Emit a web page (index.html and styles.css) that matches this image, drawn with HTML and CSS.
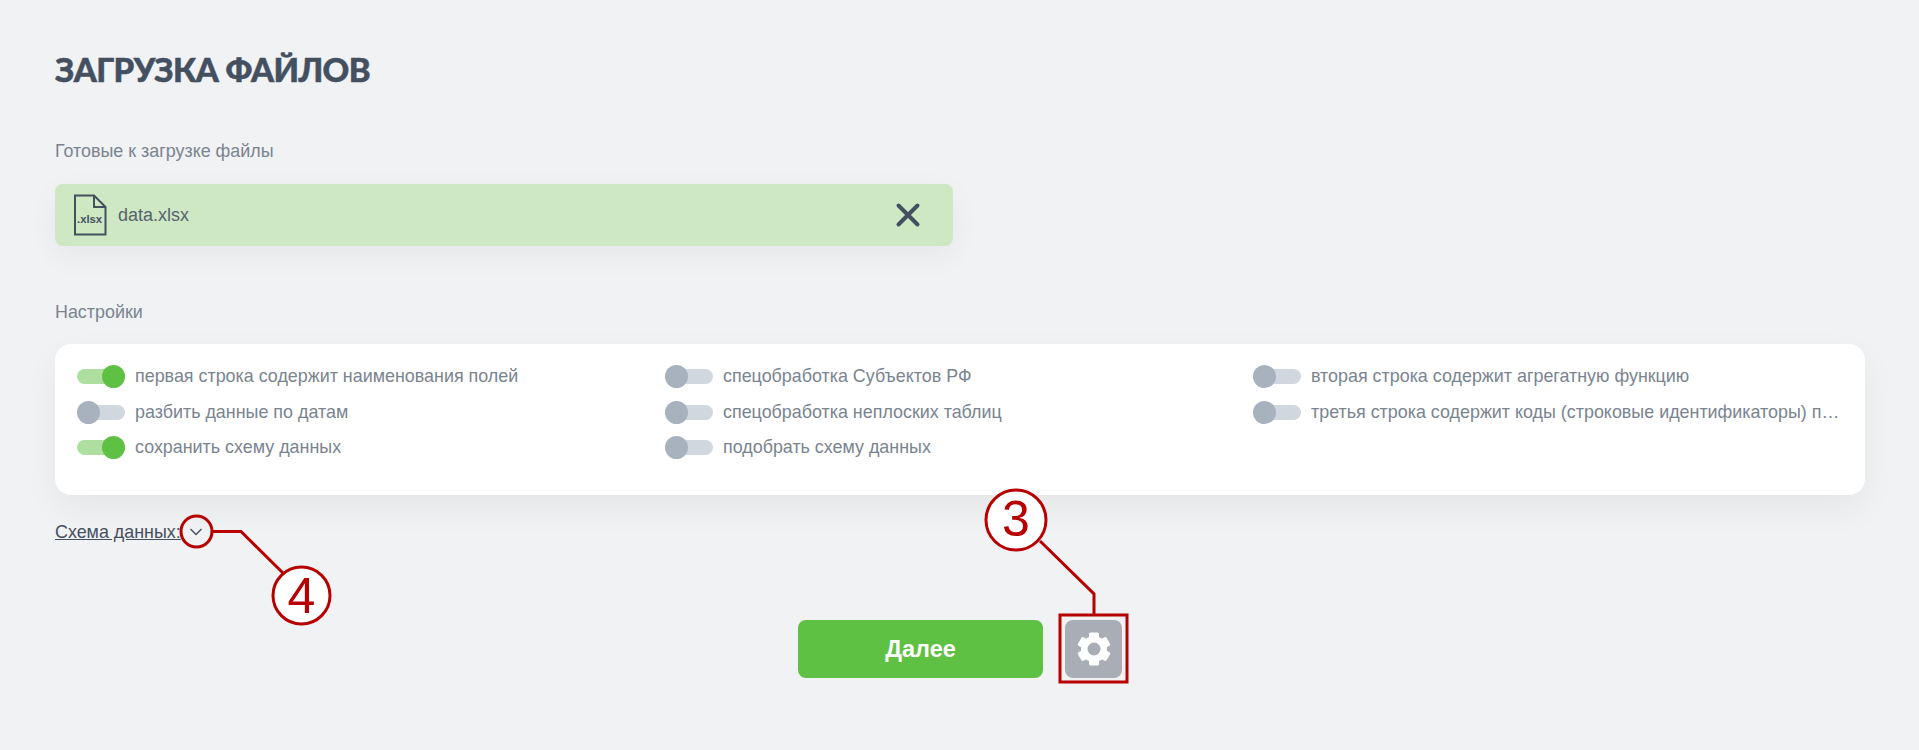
FILE: index.html
```html
<!DOCTYPE html>
<html lang="ru">

<head>
    <meta charset="utf-8">
    <meta name="viewport" content="width=device-width, initial-scale=1.0">
    <title>Загрузка файлов</title>
    <link rel="stylesheet" href="styles.css">
</head>

<body>

    <main class="page">
        <h1 class="title">ЗАГРУЗКА ФАЙЛОВ</h1>

        <p class="label label-files">Готовые к загрузке файлы</p>
        <div class="file">
            <svg class="file-icon" width="34" height="42" viewBox="0 0 34 42">
                <path d="M2 1.5H21L32.5 13V40.5H2Z M21 1.5V13H32.5" fill="none" stroke="#44505f" stroke-width="2" />
                <text x="4" y="28.5" class="file-ext">.xlsx</text>
            </svg>
            <span class="file-name">data.xlsx</span>
            <svg class="file-remove" width="26" height="26" viewBox="0 0 26 26">
                <path d="M3.5 3.5L22.5 22.5M22.5 3.5L3.5 22.5" stroke="#44505f" stroke-width="4" stroke-linecap="round" />
            </svg>
        </div>

        <p class="label label-settings">Настройки</p>
        <section class="settings">
            <div class="option"><span class="toggle on"></span><span class="option-text">первая строка содержит наименования полей</span></div>
            <div class="option"><span class="toggle"></span><span class="option-text">спецобработка Субъектов РФ</span></div>
            <div class="option"><span class="toggle"></span><span class="option-text">вторая строка содержит агрегатную функцию</span></div>
            <div class="option"><span class="toggle"></span><span class="option-text">разбить данные по датам</span></div>
            <div class="option"><span class="toggle"></span><span class="option-text">спецобработка неплоских таблиц</span></div>
            <div class="option"><span class="toggle"></span><span class="option-text">третья строка содержит коды (строковые идентификаторы) полей</span></div>
            <div class="option"><span class="toggle on"></span><span class="option-text">сохранить схему данных</span></div>
            <div class="option"><span class="toggle"></span><span class="option-text">подобрать схему данных</span></div>
        </section>

        <div class="schema">
            <a class="schema-link" href="#">Схема данных:</a>
            <svg width="16" height="10" viewBox="0 0 16 10">
                <path d="M2.5 2L8 7.5L13.5 2" fill="none" stroke="#44505f" stroke-width="1.4" />
            </svg>
        </div>

        <div class="actions">
            <button class="next">Далее</button>
            <button class="gear">
                <svg width="36" height="36" viewBox="0 0 36 36">
                    <g fill="#fff">
                        <rect x="13" y="1.5" width="10" height="33" rx="1.5" />
                        <rect x="13" y="1.5" width="10" height="33" rx="1.5" transform="rotate(60 18 18)" />
                        <rect x="13" y="1.5" width="10" height="33" rx="1.5" transform="rotate(120 18 18)" />
                    </g>
                    <circle cx="18" cy="18" r="10" fill="none" stroke="#fff" stroke-width="6" />
                    <circle cx="18" cy="18" r="6.5" fill="#a9aeb6" />
                </svg>
            </button>
        </div>
    </main>

    <!-- красные пометки поверх скриншота -->
    <svg class="marks" width="1919" height="750" viewBox="0 0 1919 750">
        <g fill="none" stroke="#b80000" stroke-width="3">
            <circle cx="196.5" cy="531.5" r="15.5" />
            <path d="M212 531.5H241L283 573" />
            <circle cx="301.5" cy="595.5" r="28.5" fill="#fff" />
            <circle cx="1016" cy="520" r="30" fill="#fff" />
            <path d="M1040 541L1094 594V614" />
            <rect x="1060" y="615" width="67" height="67" />
        </g>
        <text x="301.5" y="613" class="mark-num">4</text>
        <text x="1016" y="536" class="mark-num">3</text>
    </svg>

</body>

</html>
```

FILE: styles.css
```css
html {
    margin: 0;
}

body {
    margin: 0;
    height: 750px;
    overflow: hidden;
    position: relative;
    background-color: #f1f2f4;
    font-family: "Liberation Sans", Arial, sans-serif;
}

.page {
    padding: 49px 54px 0 55px;
}

.title {
    margin: 0;
    font-family: Lato, sans-serif;
    font-weight: 900;
    font-size: 33px;
    line-height: 40px;
    letter-spacing: -0.55px;
    -webkit-text-stroke: 0.5px #44505f;
    color: #44505f;
}

.label {
    margin: 0;
    font-size: 17.9px;
    line-height: 20px;
    color: #7a8490;
}

.label-files {
    margin-top: 52px;
}

.label-settings {
    margin-top: 56px;
}

.file {
    display: flex;
    align-items: center;
    width: 898px;
    height: 62px;
    margin-top: 23px;
    padding: 0 32px 0 18px;
    box-sizing: border-box;
    background-color: #cee8c4;
    border-radius: 8px;
    box-shadow: 0 10px 30px rgba(0, 0, 0, 0.05);
}

.file-icon {
    flex: none;
}

.file-ext {
    font-size: 11.3px;
    font-weight: 700;
    fill: #44505f;
}

.file-name {
    margin-left: 11px;
    font-size: 18px;
    color: #56626f;
}

.file-remove {
    flex: none;
    margin-left: auto;
}

.settings {
    display: grid;
    grid-template-columns: repeat(3, 1fr);
    grid-auto-rows: 35.5px;
    height: 151px;
    margin-top: 22px;
    padding: 15px 24px 0 22px;
    box-sizing: border-box;
    background-color: #fff;
    border-radius: 16px;
    box-shadow: 0 14px 34px rgba(0, 0, 0, 0.05);
}

.option {
    display: flex;
    align-items: center;
    min-width: 0;
}

.option-text {
    margin-left: 10px;
    font-size: 17.9px;
    color: #7a8490;
    white-space: nowrap;
    overflow: hidden;
    text-overflow: ellipsis;
}

.toggle {
    position: relative;
    flex: none;
    width: 48px;
    height: 15px;
    border-radius: 8px;
    background-color: #d1d7df;
}

.toggle::after {
    content: "";
    position: absolute;
    top: -4px;
    left: 0;
    width: 23px;
    height: 23px;
    border-radius: 50%;
    background-color: #a8b2bf;
}

.toggle.on {
    background-color: #aedfa1;
}

.toggle.on::after {
    left: 25px;
    background-color: #5fc143;
}

.schema {
    display: flex;
    align-items: center;
    gap: 7px;
    margin-top: 26px;
}

.schema-link {
    font-size: 17.9px;
    line-height: 22px;
    color: #44505f;
}

.actions {
    display: flex;
    justify-content: center;
    gap: 22px;
    margin-top: 77px;
}

button {
    height: 58px;
    border: none;
    border-radius: 8px;
    font-family: "Liberation Sans", Arial, sans-serif;
    cursor: pointer;
}

.next {
    width: 245px;
    background-color: #5fc143;
    color: #fff;
    font-size: 23.5px;
    font-weight: 700;
}

.gear {
    display: flex;
    align-items: center;
    justify-content: center;
    width: 57px;
    padding: 0;
    background-color: #a9aeb6;
}

.marks {
    position: absolute;
    top: 0;
    left: 0;
    pointer-events: none;
}

.mark-num {
    font-size: 50px;
    fill: #b80000;
    text-anchor: middle;
}
```
